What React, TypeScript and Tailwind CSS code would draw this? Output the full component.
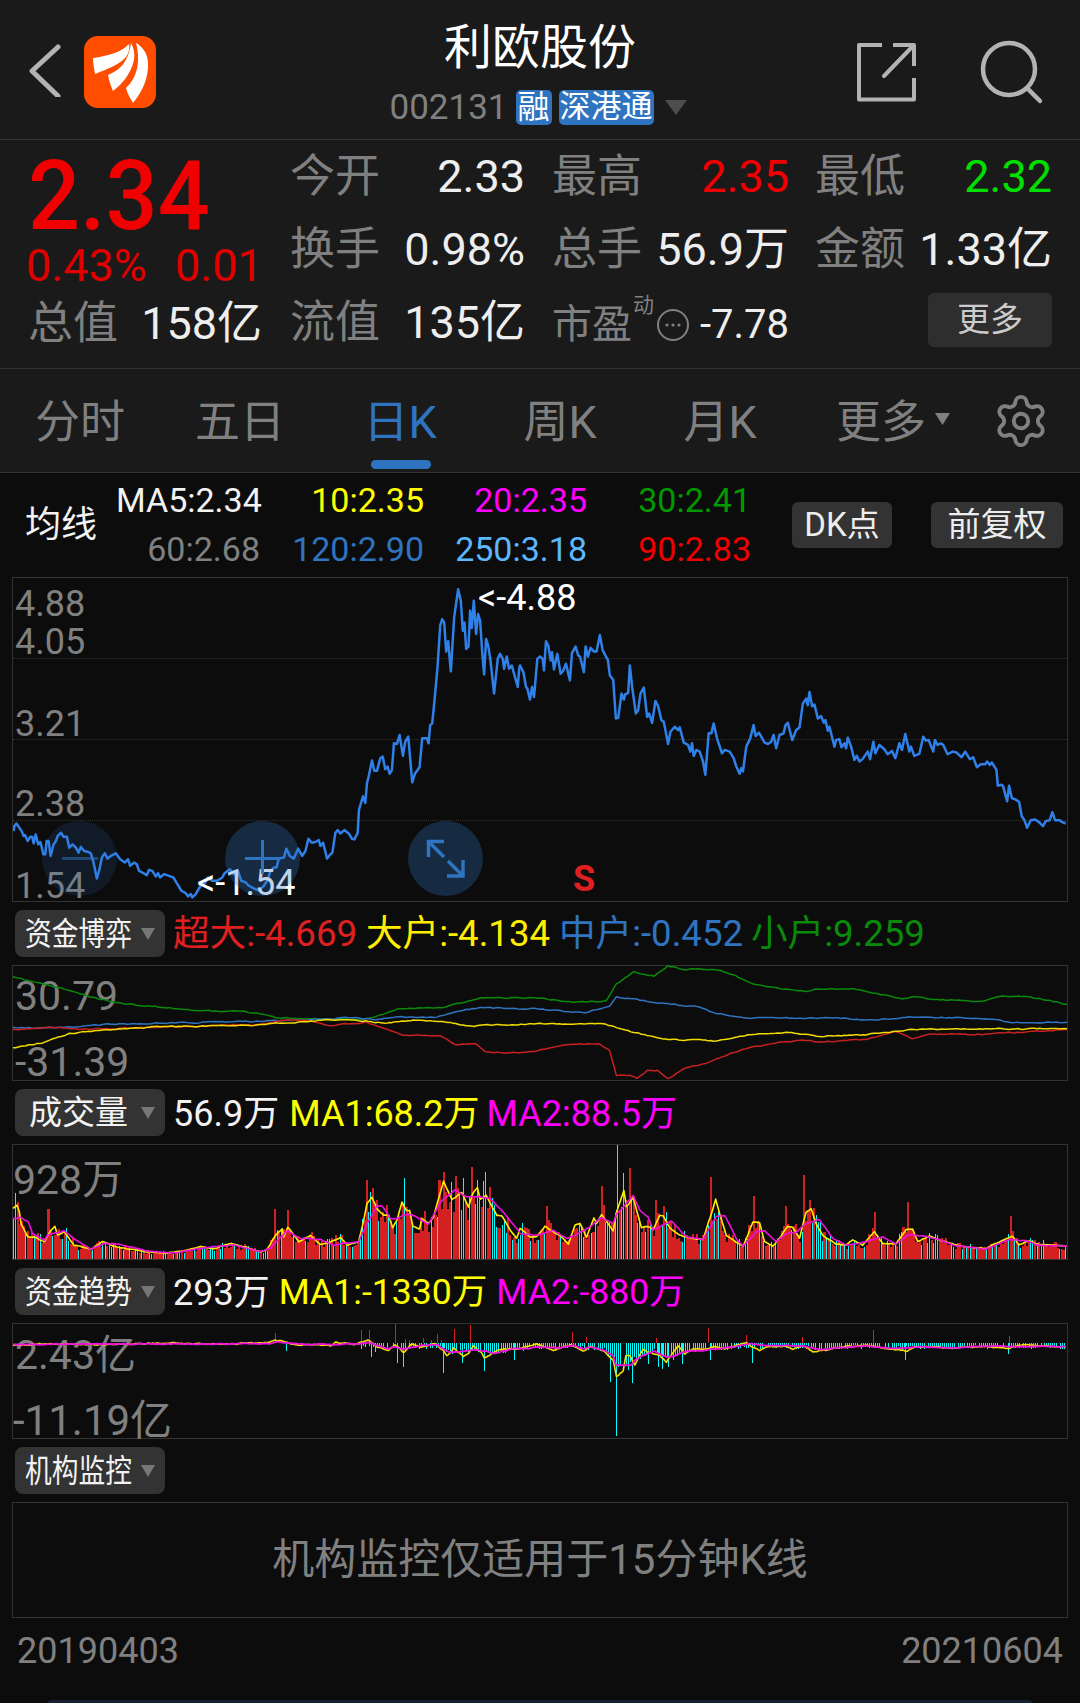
import { Settings } from "lucide-react";

const parse = (s: string): number[][] =>
  s.trim().split(/\s+/).map((p) => p.split(",").map(Number));

// small seeded generator so the noisy charts stay the same on every load
const makeRng = (seed: number) => () => {
  seed = (seed * 16807) % 2147483647;
  return seed / 2147483647;
};

const rough = (s: string, seed: number, amp = 1.6, step = 4) => {
  const rng = makeRng(seed);
  const pts = parse(s);
  const out: string[] = [];
  let drift = 0;
  for (let i = 0; i < pts.length - 1; i++) {
    const [x0, y0] = pts[i];
    const [x1, y1] = pts[i + 1];
    const n = Math.max(1, Math.round((x1 - x0) / step));
    for (let k = 0; k < n; k++) {
      const t = k / n;
      drift = drift * 0.6 + (rng() - 0.5) * amp * 2;
      out.push(`${x0 + (x1 - x0) * t},${(y0 + (y1 - y0) * t + drift).toFixed(1)}`);
    }
  }
  out.push(pts[pts.length - 1].join(","));
  return out.join(" ");
};

const yAt = (pts: number[][], x: number) => {
  for (let i = 0; i < pts.length - 1; i++) {
    if (x >= pts[i][0] && x <= pts[i + 1][0]) {
      const t = (x - pts[i][0]) / (pts[i + 1][0] - pts[i][0] || 1);
      return pts[i][1] + (pts[i + 1][1] - pts[i][1]) * t;
    }
  }
  return pts[pts.length - 1][1];
};

const priceLeft =
  "38,785 40,770 46,762 55,775 62,785 68,800 72,797 80,815 88,802 94,803 98,822 104,795 112,825 118,818 122,832 127,855 133,855 137,815 143,815 149,860 158,825 165,815 170,800 180,790 188,802 198,802 205,835 215,825 225,835 233,850 240,833 250,845 262,848 270,852 278,880 288,928 296,900 303,865 312,852 320,868 330,860 345,852 358,870 372,880 382,870 388,890 400,880 408,885 415,905 425,910 438,918 445,902 455,905 465,922 472,912 478,925 490,915 505,920 518,925 530,945 542,965 555,972 562,982 570,975 575,985 585,975 600,950 612,943 622,925 635,935 650,935 665,925 672,912 688,900 700,915 712,905 722,935 735,940 745,950 760,958 775,965 790,950 800,935 810,905 820,895 828,895 835,868 850,865 858,838 868,860 880,868 893,838 905,860 915,845 924,808 934,820 945,818 955,812 960,830 968,820 980,868 990,855 996,850 1005,790 1012,782 1020,792 1032,782 1045,792 1055,808 1062,810 1072,790 1076,720 1088,680 1095,700 1100,640 1105,620 1115,572 1122,603 1130,603 1140,565 1147,560 1155,598 1162,590 1168,612 1175,600 1181,520 1190,522 1198,495 1208,558 1215,515 1224,500 1236,638 1244,612 1258,592 1266,505 1280,505 1285,520 1290,465 1296,460 1302,400 1312,290 1320,165 1326,145 1332,155 1338,243 1344,212 1352,303 1362,140 1374,55 1382,90 1388,180 1393,155 1398,235 1405,228 1410,120 1415,172 1421,90 1428,190 1434,130 1440,150 1446,240 1452,312 1458,205 1464,225 1470,260 1482,370 1493,265 1500,250 1508,265 1512,295 1520,258 1527,295 1535,285 1545,320 1553,350 1558,290";
const priceRight =
  "-2,290 0,285 10,305 18,350 22,355 30,388 36,350 42,380 52,265 60,258 68,265 72,300 78,212 85,225 92,270 96,245 102,297 112,250 122,310 130,300 138,280 150,330 156,248 167,228 175,255 180,258 192,305 197,228 204,258 212,232 222,243 230,243 240,193 248,238 258,258 264,268 270,315 280,328 288,445 295,443 305,370 312,388 316,372 325,368 330,285 337,350 348,430 355,420 362,370 372,352 382,440 388,430 397,458 407,392 415,408 425,450 432,455 445,522 452,485 465,470 475,480 480,472 492,518 505,525 512,545 517,520 522,558 530,540 540,545 550,575 557,615 567,490 575,490 582,460 592,505 607,550 615,540 630,545 642,565 650,590 660,612 665,595 670,605 680,530 692,505 702,465 708,498 718,488 735,518 745,522 755,515 762,495 770,535 780,495 792,490 798,465 805,458 818,510 830,480 840,472 850,400 860,385 865,405 870,365 878,408 885,403 895,445 905,438 913,458 918,450 925,482 930,470 945,530 950,510 960,508 966,532 975,520 980,535 985,503 995,530 1005,570 1012,558 1020,575 1030,567 1045,545 1052,568 1062,515 1068,550 1080,525 1095,538 1105,553 1118,543 1128,565 1140,520 1148,540 1158,492 1170,545 1175,530 1185,558 1200,552 1212,500 1220,512 1228,510 1242,545 1247,510 1255,525 1265,520 1272,525 1285,553 1300,545 1312,548 1327,562 1338,545 1352,568 1362,562 1373,592 1385,583 1398,583 1404,575 1412,585 1418,578 1432,600 1436,648 1448,645 1452,650 1464,695 1470,648 1478,685 1490,690 1500,697 1508,740 1516,752 1524,775 1535,752 1548,750 1560,758 1572,770 1580,755 1592,752 1600,728 1608,752 1622,752 1630,758 1640,762";

const flowGreen =
  "18,230 50,245 100,270 130,290 170,307 240,322 320,335 350,332 380,340 400,352 440,355 480,358 520,358 545,350 580,325 640,322 700,292 780,292 830,305 880,302 895,250 920,215 950,225 970,195 990,205 1040,208 1065,222 1090,248 1130,265 1170,272 1190,265 1240,265 1310,295 1330,288 1350,297 1420,303 1460,288 1495,288 1550,312";
const flowBlue =
  "18,383 100,382 160,372 250,368 320,365 400,362 450,358 520,352 545,358 570,350 630,352 670,330 700,322 780,325 850,338 885,318 895,290 950,305 1010,320 1040,340 1090,353 1150,355 1210,352 1260,360 1320,350 1430,355 1470,368 1550,366";
const flowYellow =
  "18,445 60,428 100,400 140,392 220,380 290,378 370,375 420,368 470,360 530,362 560,368 600,360 650,365 680,378 780,370 880,372 920,398 970,418 1040,424 1090,403 1150,398 1190,408 1250,405 1320,388 1550,386";
const flowRed =
  "18,390 70,382 130,388 200,382 300,378 380,372 410,358 450,362 480,378 530,365 560,385 585,405 640,408 660,432 690,432 705,458 760,458 830,432 870,432 885,452 895,528 915,528 925,535 940,512 955,512 970,538 990,510 1025,490 1090,440 1165,420 1190,425 1260,418 1300,395 1325,415 1350,403 1430,403 1470,398 1550,388";

const shift = (s: string, dx: number) =>
  parse(s).map(([x, y]) => `${x + dx},${y}`).join(" ");

const volYellow =
  "36,205 48,195 55,215 60,250 80,290 100,290 130,305 148,272 162,258 170,285 190,275 220,315 270,328 305,305 340,318 380,325 440,335 500,340 560,330 600,320 640,325 690,310 730,320 780,335 800,328 825,285 845,265 850,290 862,260 895,305 930,285 960,312 985,308 1020,292 1040,315 1075,305 1090,240 1100,190 1115,170 1130,205 1150,225 1165,225 1177,262 1190,240 1205,185 1218,210 1228,210 1238,258 1258,265 1265,235 1285,248 1300,230 1330,122 1355,178 1385,155 1405,200 1418,160 1432,140 1440,175 1458,165 1490,225 1505,225 1530,270 1550,295 1558,270 " +
  shift(
    "0,265 30,290 50,290 75,258 100,275 120,285 145,312 165,255 180,250 200,290 222,232 230,250 245,222 280,272 290,215 312,150 320,200 340,170 365,262 385,258 400,268 420,225 430,225 450,262 480,285 520,295 550,298 575,220 588,175 600,220 620,285 670,320 700,245 720,248 735,305 760,318 780,295 805,258 820,262 840,295 860,215 875,205 890,250 910,285 950,312 980,315 1000,298 1030,315 1065,275 1090,310 1130,312 1160,268 1180,265 1195,305 1230,288 1280,305 1330,320 1400,325 1440,305 1480,288 1500,315 1530,302 1558,312 1644,318",
    1560,
  );
const volMagenta =
  "36,235 60,232 82,245 95,280 130,300 140,285 190,272 220,295 270,328 310,310 350,312 440,332 510,340 590,325 700,315 780,335 810,322 860,272 900,295 960,298 1000,315 1075,305 1100,250 1130,195 1145,195 1170,235 1190,235 1210,222 1235,222 1285,252 1320,185 1365,148 1400,170 1440,168 1470,175 1510,215 1558,275 " +
  shift(
    "0,280 50,285 100,270 140,295 170,282 210,260 245,232 280,250 290,222 340,165 360,210 385,230 400,268 455,242 500,290 550,298 590,228 615,225 650,295 670,318 710,275 735,272 770,305 800,280 830,275 860,250 900,237 940,295 980,315 1040,305 1090,290 1130,312 1170,282 1250,295 1300,315 1400,327 1470,298 1520,302 1558,315 1644,318",
    1560,
  );

const volBars = () => {
  const rng = makeRng(20210604);
  const yellow = parse(volYellow);
  const peaks: [number, number, boolean][] = [
    [140, 205, false], [824, 205, false], [860, 208, false], [1095, 118, false], [1112, 142, false],
    [1212, 112, true], [1328, 95, false], [1364, 105, false], [1412, 80, false], [1453, 95, true],
    [1640, 198, false], [1802, 135, false], [1849, 12, true], [1890, 82, false], [1970, 178, false],
    [2132, 108, false], [2258, 165, false], [2360, 198, false], [2413, 102, false], [2624, 216, false],
    [2720, 183, false], [3032, 228, false],
  ];
  let red = "";
  let cyan = "";
  for (let i = 0; i < 520; i++) {
    const x = 37 + i * 6.09;
    const base = 357 - yAt(yellow, x);
    let h = base * (0.7 + rng() * 0.6);
    let isCyan = rng() < 0.34;
    const peak = peaks.find((p) => Math.abs(p[0] - x) < 3.05);
    if (peak) {
      h = 357 - peak[1];
      isCyan = peak[2];
    }
    const top = (357 - Math.max(h, 6)).toFixed(1);
    if (isCyan) cyan += `M${x} ${top}V357H${x + 3}V${top}Z`;
    else red += `M${x - 1} ${top}V357H${x + 5.2}V${top}Z`;
  }
  return { red, cyan };
};

const trendYellow =
  "-924,76 -860,70 -700,72 -500,68 -300,70 -160,66 -135,58 -100,66 -60,74 -30,72 0,72 30,75 45,65 100,72 120,65 145,58 170,78 205,88 225,72 250,95 275,68 300,80 345,70 370,90 380,105 392,95 400,82 430,108 445,100 460,75 485,95 493,112 520,98 540,85 600,85 650,70 700,88 750,72 790,92 810,78 850,90 880,120 890,170 910,152 918,105 930,105 945,135 970,85 985,95 1000,100 1020,105 1040,125 1075,75 1095,100 1120,85 1160,88 1185,78 1215,85 1280,65 1295,78 1320,90 1340,78 1400,78 1420,85 1450,75 1480,92 1530,88 1558,80 1640,74 1700,82 1760,92 1790,78 1900,82 2000,78 2070,86 2100,72 2240,80";
const trendMagenta =
  "-924,72 -700,70 -300,70 -150,68 -130,62 -90,68 -30,72 0,70 30,72 115,70 145,65 205,85 225,78 250,85 300,75 350,72 370,85 390,95 440,92 460,88 500,92 520,100 580,85 620,85 650,78 720,82 760,75 790,85 810,80 850,88 880,105 888,135 935,135 945,120 970,105 1005,92 1040,110 1060,108 1100,92 1160,88 1220,82 1290,70 1340,75 1450,75 1500,88 1558,82 1640,76 1720,84 1800,78 1900,82 2000,76 2100,78 2240,78";

const trendBars = () => {
  const rng = makeRng(1330);
  const mag = parse(trendMagenta);
  const down: [number, number][] = [
    [-102, 90], [151, 110], [163, 95], [229, 128], [247, 140], [367, 158], [427, 128], [493, 152], [583, 118],
    [871, 185], [889, 350], [937, 188], [985, 132], [1015, 140], [1027, 146], [1045, 140], [1087, 132], [1171, 120],
    [1297, 128], [1758, 120], [2066, 100],
  ];
  const up: [number, number][] = [
    [-138, 36], [121, 28], [145, 28], [223, 10], [253, 55], [265, 58], [307, 52], [331, 58], [349, 40], [361, 58],
    [403, 25], [451, 12], [757, 34], [799, 48], [1009, 52], [1165, 22], [1279, 42], [1447, 48], [1662, 27], [2070, 45],
  ];
  let cyan = "";
  let red = "";
  for (let x = 115; x < 2240; x += 6.09) {
    if (rng() < 0.14) continue;
    const bottom = 68 + 5 + rng() * 12 + Math.max(0, yAt(mag, x) - 78) * (0.7 + rng() * 0.5);
    cyan += `M${x} 68V${bottom.toFixed(1)}H${x + 3}V68Z`;
  }
  down.forEach(([x, y]) => (cyan += `M${x} 68V${y}H${x + 3}V68Z`));
  up.forEach(([x, y]) => (red += `M${x} ${y}V68H${x + 3}V${y}Z`));
  return { cyan, red };
};

const vol = volBars();
const trend = trendBars();

function Stat({ label, value, color = "text-[#eeeeee]" }: { label: string; value: string; color?: string }) {
  return (
    <div className="flex items-center justify-between h-[73px]">
      <span className="text-[45px] leading-none text-[#808080]">{label}</span>
      <span className={`text-[45px] leading-none whitespace-nowrap ${color}`}>{value}</span>
    </div>
  );
}

function Tag({ label, narrow }: { label: string; narrow?: boolean }) {
  return (
    <div className="relative w-[150px] h-[47px] rounded-lg bg-[#333333] flex items-center shrink-0">
      {narrow ? (
        <span className="ml-[10px] text-[32px] leading-none text-[#f2f2f2] whitespace-nowrap origin-left scale-x-[0.835]">{label}</span>
      ) : (
        <span className="ml-[14px] text-[33px] leading-none text-[#f2f2f2] whitespace-nowrap">{label}</span>
      )}
      <svg className="absolute left-[126px] top-[18px]" width="14" height="12" viewBox="0 0 14 12">
        <path d="M0 0H14L7 12Z" fill="#777777" />
      </svg>
    </div>
  );
}

function TagRow({ label, narrow, children }: { label: string; narrow?: boolean; children?: React.ReactNode }) {
  return (
    <div className="h-[63px] pl-[15px] pt-[8px] flex items-start">
      <Tag label={label} narrow={narrow} />
      <div className="ml-[8px] h-[49px] flex items-center text-[36px] leading-none whitespace-nowrap">{children}</div>
    </div>
  );
}

const chartLabel = "absolute left-[2px] leading-none text-[#808080] -translate-y-1/2";

function Line({ points, color, seed, width = 1.5 }: { points: string; color: string; seed: number; width?: number }) {
  return (
    <polyline
      points={rough(points, seed, 1.5)}
      fill="none"
      stroke={color}
      strokeWidth={width}
      strokeLinejoin="round"
      vectorEffect="non-scaling-stroke"
    />
  );
}

export default function App() {
  return (
    <div className="w-[1080px] h-[1703px] overflow-hidden flex flex-col bg-[#0c0c0c] font-[Roboto,'Noto_Sans_CJK_SC',sans-serif]">
      {/* Header */}
      <header className="relative h-[140px] shrink-0 bg-[#1a1a1a] border-b border-[#333333] flex items-center">
        <svg className="ml-[28px]" width="34" height="54" viewBox="0 0 34 54">
          <path d="M30 4L4 28L30 53" fill="none" stroke="#b3b3b3" strokeWidth="5" strokeLinecap="round" strokeLinejoin="round" />
        </svg>
        <div className="ml-[22px] mt-[4px] w-[72px] h-[72px] rounded-[14px] bg-[#ff4d00]">
          <svg width="72" height="72" viewBox="0 0 72 72">
            <path d="M9 22C24 20 38 16 45 8C46 14 44 18 42 21C36 28 24 33 11 38C10 32 9 27 9 22Z" fill="#fff" />
            <path d="M47 7C50 12 51 18 50 24C47 38 38 48 29 55C27 50 25 45 24 39C34 35 44 28 47 7Z" fill="#fff" />
            <path d="M52 7C59 11 63 17 64 26C65 42 58 56 49 67C46 62 43 57 42 52C50 45 58 30 52 7Z" fill="#fff" />
          </svg>
        </div>
        <div className="absolute left-0 right-0 top-[21px] flex flex-col items-center">
          <div className="text-[48px] leading-[54px] text-white">利欧股份</div>
          <div className="mt-[14px] -ml-[4px] flex items-center h-[36px]">
            <span className="text-[35px] leading-none text-[#808080]">002131</span>
            <span className="ml-[8px] w-[36px] h-[35px] rounded-[5px] bg-[#2f74c0] text-white text-[32px] leading-[34px] text-center">融</span>
            <span className="ml-[7px] w-[95px] h-[35px] rounded-[5px] bg-[#2f74c0] text-white text-[31px] leading-[34px] text-center whitespace-nowrap">深港通</span>
            <svg className="ml-[11px]" width="22" height="15" viewBox="0 0 22 15">
              <path d="M0 0H22L11 15Z" fill="#4d4d4d" />
            </svg>
          </div>
        </div>
        <svg className="absolute left-[857px] top-[43px]" width="62" height="62" viewBox="0 0 62 62" fill="none" stroke="#b3b3b3" strokeWidth="4" strokeLinejoin="round">
          <path d="M25 2H2V56.5H57V35" />
          <path d="M36 2H57V23" />
          <path d="M27 33L55 4" strokeLinecap="round" />
        </svg>
        <svg className="absolute left-[978px] top-[38px]" width="70" height="70" viewBox="0 0 70 70" fill="none" stroke="#b3b3b3" strokeWidth="4.5">
          <circle cx="31" cy="31" r="26" />
          <path d="M50 51L62 63" strokeLinecap="round" />
        </svg>
      </header>

      {/* Quote */}
      <section className="relative h-[229px] shrink-0 bg-[#1a1a1a] border-b border-[#333333] flex">
        <div className="w-[290px] shrink-0 pl-[28px] flex flex-col">
          <div className="h-[112px] flex items-center text-[96px] leading-[70px] font-medium text-[#f00000] origin-left scale-x-[0.955]">2.34</div>
          <div className="h-[28px] -ml-[2px] flex items-center text-[45px] leading-[28px] text-[#e00000]">
            <span className="w-[149px]">0.43%</span>
            <span>0.01</span>
          </div>
          <div className="mt-[7px] w-[234px] flex items-center justify-between h-[73px]">
            <span className="text-[45px] leading-none text-[#808080]">总值</span>
            <span className="text-[45px] leading-none text-[#eeeeee]">158亿</span>
          </div>
        </div>
        <div className="w-[235px] shrink-0 flex flex-col">
          <Stat label="今开" value="2.33" />
          <Stat label="换手" value="0.98%" />
          <Stat label="流值" value="135亿" />
        </div>
        <div className="ml-[27px] w-[237px] shrink-0 flex flex-col">
          <Stat label="最高" value="2.35" color="text-[#f00000]" />
          <Stat label="总手" value="56.9万" />
          <div className="relative flex items-center h-[73px] pt-[4px]">
            <span className="shrink-0 whitespace-nowrap text-[40px] leading-none text-[#808080]">市盈</span>
            <span className="absolute left-[81px] top-[9px] text-[21px] leading-none text-[#808080]">动</span>
            <svg className="ml-[24px] shrink-0" width="34" height="34" viewBox="0 0 34 34" fill="none">
              <circle cx="17" cy="17" r="15" stroke="#808080" strokeWidth="2" />
              <circle cx="11" cy="17" r="1.6" fill="#808080" />
              <circle cx="17" cy="17" r="1.6" fill="#808080" />
              <circle cx="23" cy="17" r="1.6" fill="#808080" />
            </svg>
            <span className="ml-[10px] text-[40px] leading-none whitespace-nowrap text-[#eeeeee]">-7.78</span>
          </div>
        </div>
        <div className="ml-[26px] w-[237px] shrink-0 flex flex-col">
          <Stat label="最低" value="2.32" color="text-[#00e000]" />
          <Stat label="金额" value="1.33亿" />
          <div className="h-[73px] flex justify-end items-start pt-[7px]">
            <div className="w-[124px] h-[54px] rounded-md bg-[#2e2e2e] text-[33px] leading-[54px] text-center text-[#cccccc]">更多</div>
          </div>
        </div>
      </section>

      {/* Period tabs */}
      <nav className="h-[104px] shrink-0 pt-[3px] bg-[#1a1a1a] border-b border-[#333333] flex items-center text-[45px] leading-none text-[#808080]">
        <div className="w-[160px] text-center">分时</div>
        <div className="w-[160px] text-center">五日</div>
        <div className="relative w-[160px] text-center text-[#2f74c0]">
          日K
          <div className="absolute left-[51px] top-[60px] w-[60px] h-[9px] rounded-full bg-[#2f74c0]" />
        </div>
        <div className="w-[160px] text-center">周K</div>
        <div className="w-[160px] text-center">月K</div>
        <div className="w-[160px] pl-[36px] flex items-center">
          <span className="whitespace-nowrap">更多</span>
          <svg className="ml-[9px] -mt-[6px]" width="15" height="12" viewBox="0 0 15 12">
            <path d="M0 0H15L7.5 12Z" fill="#808080" />
          </svg>
        </div>
        <div className="flex-1 pl-[32px] -mt-[3px]">
          <Settings size={58} strokeWidth={1.6} color="#808080" />
        </div>
      </nav>

      {/* MA row */}
      <div className="h-[104px] shrink-0 pl-[25px] flex items-center">
        <div className="w-[91px] text-[36px] leading-none text-[#f2f2f2]">均线</div>
        <div className="grid grid-cols-[144px_164px_163px_164px] text-right text-[34px] leading-[49px]">
          <span className="text-[#f2f2f2]">MA5:2.34</span>
          <span className="text-[#ffff00]">10:2.35</span>
          <span className="text-[#ff00ff]">20:2.35</span>
          <span className="text-[#009900]">30:2.41</span>
          <span className="text-[#808080]">60:2.68</span>
          <span className="text-[#2f74c0]">120:2.90</span>
          <span className="text-[#5bb8ff]">250:3.18</span>
          <span className="text-[#f00000]">90:2.83</span>
        </div>
        <div className="ml-[41px] w-[100px] h-[46px] rounded-md bg-[#333333] text-[33px] leading-[46px] text-center text-[#eeeeee]">DK点</div>
        <div className="ml-[39px] w-[132px] h-[46px] rounded-md bg-[#333333] text-[33px] leading-[46px] text-center text-[#eeeeee]">前复权</div>
      </div>

      {/* Price chart */}
      <div className="relative mx-[12px] h-[325px] shrink-0 border border-[#333333]">
        <div className="absolute left-0 right-0 top-[80px] border-t border-dotted border-[#333333]" />
        <div className="absolute left-0 right-0 top-[161px] border-t border-dotted border-[#333333]" />
        <div className="absolute left-0 right-0 top-[242px] border-t border-dotted border-[#333333]" />
        <span className={`${chartLabel} top-[26px] text-[36px]`}>4.88</span>
        <span className={`${chartLabel} top-[64px] text-[36px]`}>4.05</span>
        <span className={`${chartLabel} top-[146px] text-[36px]`}>3.21</span>
        <span className={`${chartLabel} top-[226px] text-[36px]`}>2.38</span>
        <span className={`${chartLabel} top-[308px] text-[36px]`}>1.54</span>
        <svg className="absolute inset-0 w-full h-full" viewBox="36 21 3168 975" preserveAspectRatio="none">
          <polyline points={priceLeft} fill="none" stroke="#2f80e8" strokeWidth="2.5" strokeLinejoin="round" vectorEffect="non-scaling-stroke" />
          <g transform="translate(1560 0)">
            <polyline points={priceRight} fill="none" stroke="#2f80e8" strokeWidth="2.5" strokeLinejoin="round" vectorEffect="non-scaling-stroke" />
          </g>
        </svg>
        <span className="absolute left-[465px] top-[20px] -translate-y-1/2 text-[36px] leading-none text-white">&lt;-4.88</span>
        <span className="absolute left-[184px] top-[305px] -translate-y-1/2 text-[36px] leading-none text-white">&lt;-1.54</span>
        <span className="absolute left-[560px] top-[301px] -translate-y-1/2 text-[36px] leading-none font-bold text-[#e02020]">S</span>

        {/* zoom buttons */}
        <div className="absolute left-[29px] top-[243px] w-[75px] h-[75px] rounded-full bg-[#2f74c0]/15 flex items-center justify-center">
          <div className="w-[36px] h-[3px] bg-[#2f74c0]/50" />
        </div>
        <div className="absolute left-[212px] top-[243px] w-[75px] h-[75px] rounded-full bg-[#2f74c0]/30">
          <svg width="75" height="75" viewBox="0 0 75 75">
            <path d="M37.5 19V53M20 37.5H55" stroke="#2f74c0" strokeWidth="3" />
          </svg>
        </div>
        <div className="absolute left-[395px] top-[243px] w-[75px] h-[75px] rounded-full bg-[#2f74c0]/30">
          <svg width="75" height="75" viewBox="0 0 75 75" fill="none" stroke="#2f74c0" strokeWidth="3.5">
            <path d="M36 20.5H20.5V36M20.5 20.5L36 36" />
            <path d="M39 55H55V39M55 55L40 40" />
          </svg>
        </div>
      </div>

      {/* Fund flow */}
      <TagRow label="资金博弈" narrow>
        <div className="text-[36.6px] flex">
          <span className="text-[#e02020]">超大:-4.669</span>
          <span className="ml-[9px] text-[#ffee00]">大户:-4.134</span>
          <span className="ml-[9px] text-[#2f74c0]">中户:-0.452</span>
          <span className="ml-[8px] text-[#0a8a0a]">小户:9.259</span>
        </div>
      </TagRow>
      <div className="relative mx-[12px] h-[116px] shrink-0 border border-[#333333]">
        <span className={`${chartLabel} top-[30px] text-[41px]`}>30.79</span>
        <span className={`${chartLabel} top-[96px] text-[41px]`}>-31.39</span>
        <svg className="absolute inset-0 w-full h-full overflow-visible" viewBox="18 196 1532 345" preserveAspectRatio="none">
          <Line points={flowGreen} color="#0a8a0a" seed={11} />
          <Line points={flowBlue} color="#2f74c0" seed={22} />
          <Line points={flowRed} color="#c92020" seed={33} />
          <Line points={flowYellow} color="#f2dc00" seed={44} />
        </svg>
      </div>

      {/* Volume */}
      <TagRow label="成交量">
        <span className="text-[#f2f2f2]">56.9万</span>
        <span className="ml-[10px] text-[#ffff00]">MA1:68.2万</span>
        <span className="ml-[7px] text-[#ff00ff]">MA2:88.5万</span>
      </TagRow>
      <div className="relative mx-[12px] h-[116px] shrink-0 border border-[#333333]">
        <span className="absolute left-0 top-[35px] -translate-y-1/2 text-[41px] leading-none text-[#808080]">928万</span>
        <svg className="absolute inset-0 w-full h-full overflow-visible" viewBox="36 12 3168 345" preserveAspectRatio="none">
          <path d={vol.red} fill="#d42020" shapeRendering="crispEdges" />
          <path d={vol.cyan} fill="#00ffff" shapeRendering="crispEdges" />
          <polyline points={rough(volYellow, 55, 1)} fill="none" stroke="#ffee00" strokeWidth="1.6" strokeLinejoin="round" vectorEffect="non-scaling-stroke" />
          <polyline points={rough(volMagenta, 66, 1)} fill="none" stroke="#ee10dd" strokeWidth="1.6" strokeLinejoin="round" vectorEffect="non-scaling-stroke" />
        </svg>
      </div>

      {/* Fund trend */}
      <TagRow label="资金趋势" narrow>
        <span className="text-[#f2f2f2]">293万</span>
        <span className="ml-[9px] text-[35.6px] text-[#ffff00]">MA1:-1330万</span>
        <span className="ml-[9px] text-[35.6px] text-[#ff00ff]">MA2:-880万</span>
      </TagRow>
      <div className="relative mx-[12px] h-[116px] shrink-0 border border-[#333333]">
        <span className={`${chartLabel} top-[31px] text-[41px]`}>2.43亿</span>
        <span className="absolute left-0 top-[97px] -translate-y-1/2 text-[42px] leading-none text-[#808080]">-11.19亿</span>
        <svg className="absolute inset-0 w-full h-full overflow-visible" viewBox="-924 9 3168 348" preserveAspectRatio="none">
          <path d={trend.cyan} fill="#00ffff" shapeRendering="crispEdges" />
          <path d={trend.red} fill="#d42020" shapeRendering="crispEdges" />
          <polyline points={rough(trendYellow, 77, 1.5)} fill="none" stroke="#f2e000" strokeWidth="1.6" strokeLinejoin="round" vectorEffect="non-scaling-stroke" />
          <polyline points={rough(trendMagenta, 88, 1)} fill="none" stroke="#f010e0" strokeWidth="1.8" strokeLinejoin="round" vectorEffect="non-scaling-stroke" />
        </svg>
      </div>

      {/* Institutions */}
      <TagRow label="机构监控" narrow />
      <div className="mx-[12px] h-[116px] shrink-0 border border-[#333333] flex items-center justify-center text-[42px] leading-none text-[#808080]">
        机构监控仅适用于15分钟K线
      </div>
      <div className="mt-[15px] px-[17px] flex justify-between text-[36px] leading-[36px] text-[#808080]">
        <span>20190403</span>
        <span>20210604</span>
      </div>
      <div className="mt-auto mx-[48px] h-[3px] shrink-0 rounded-t-lg bg-[#142030]" />
    </div>
  );
}
